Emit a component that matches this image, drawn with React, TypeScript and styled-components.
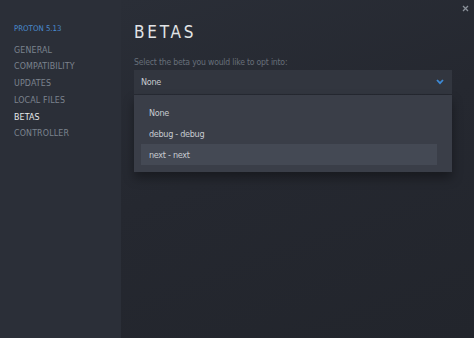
import React from 'react'
import styled, { createGlobalStyle } from 'styled-components'

const GlobalStyle = createGlobalStyle`
  html, body {
    margin: 0;
    padding: 0;
    background: #23262e;
  }
  body {
    font-family: 'DejaVu Sans Condensed', 'DejaVu Sans', sans-serif;
  }
`

const Window = styled.div`
  width: 474px;
  height: 338px;
  display: flex;
  overflow: hidden;
  position: relative;
`

const Sidebar = styled.nav`
  width: 121px;
  flex-shrink: 0;
  background: #2b2f38;
  padding: 22.5px 0 0 14px;
  box-sizing: border-box;
  display: flex;
  flex-direction: column;
`

const GameName = styled.div`
  color: #4a8bd0;
  font-size: 7.8px;
  line-height: 12px;
  margin-bottom: 7px;
`

const MenuItem = styled.div<{ active?: boolean }>`
  color: ${(p) => (p.active ? '#e6e8ea' : '#7c838e')};
  font-size: 8.8px;
  text-transform: uppercase;
  line-height: 16.8px;
  letter-spacing: 0.15px;
`

const Main = styled.main`
  flex: 1;
  background: linear-gradient(160deg, #2a2e37 0%, #252830 45%, #22252c 100%);
  padding: 22px 22px 0 13px;
  box-sizing: border-box;
`

const CloseButton = styled.div`
  position: absolute;
  top: 2px;
  right: 3px;
  width: 12px;
  height: 12px;
  display: flex;
  align-items: center;
  justify-content: center;
`

const Title = styled.h1`
  margin: 0;
  font-weight: 200;
  font-size: 17px;
  letter-spacing: 2.8px;
  color: #e2e4e6;
  line-height: 20px;
`

const Label = styled.div`
  margin-top: 14px;
  color: #676f7a;
  font-size: 8.6px;
  letter-spacing: -0.2px;
  line-height: 12px;
`

const Select = styled.div`
  margin-top: 2px;
  height: 24px;
  background: #32363f;
  display: flex;
  align-items: center;
  justify-content: space-between;
  padding: 0 8px 0 7px;
  color: #c7cad0;
  font-size: 9px;
  letter-spacing: -0.3px;
`

const Menu = styled.div`
  margin-top: 1px;
  background: #3a3e48;
  padding: 7px 15px 7px 7px;
  box-shadow: 0 6px 10px rgba(0, 0, 0, 0.35);
  display: flex;
  flex-direction: column;
`

const Option = styled.div<{ highlighted?: boolean }>`
  height: 21px;
  display: flex;
  align-items: center;
  padding-left: 8px;
  font-size: 9px;
  letter-spacing: -0.3px;
  color: #c7cad0;
  background: ${(p) => (p.highlighted ? '#444954' : 'transparent')};
`

const options = ['None', 'debug - debug', 'next - next']

const App = () => {
  return (
    <>
      <GlobalStyle />
      <Window>
        <Sidebar>
          <GameName>PROTON 5.13</GameName>
          <MenuItem>General</MenuItem>
          <MenuItem>Compatibility</MenuItem>
          <MenuItem>Updates</MenuItem>
          <MenuItem>Local Files</MenuItem>
          <MenuItem active>Betas</MenuItem>
          <MenuItem>Controller</MenuItem>
        </Sidebar>
        <Main>
          <Title>BETAS</Title>
          <Label>Select the beta you would like to opt into:</Label>
          <Select>
            <span>None</span>
            <svg width='8' height='6' viewBox='0 0 8 6'>
              <path d='M1 1 L4 4.2 L7 1' stroke='#3d8ad6' strokeWidth='1.8' fill='none' />
            </svg>
          </Select>
          <Menu>
            {options.map((o, i) => (
              <Option key={o} highlighted={i === 2}>
                {o}
              </Option>
            ))}
          </Menu>
        </Main>
        <CloseButton>
          <svg width='7' height='7' viewBox='0 0 7 7'>
            <path d='M1 1 L6 6 M6 1 L1 6' stroke='#8a9099' strokeWidth='1.3' />
          </svg>
        </CloseButton>
      </Window>
    </>
  )
}

export default App
